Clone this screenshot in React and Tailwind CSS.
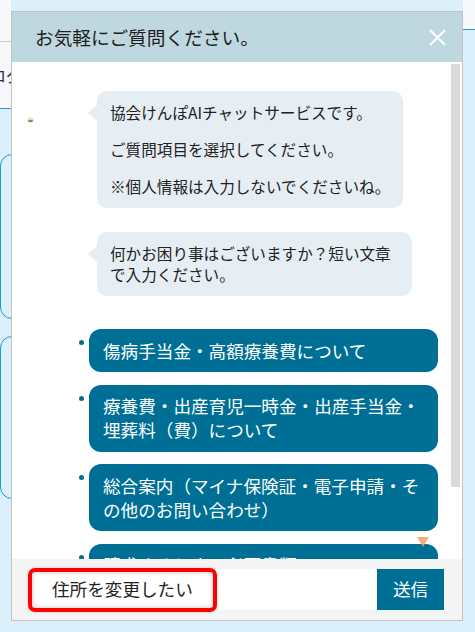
export default function App() {
  const options = [
    "傷病手当金・高額療養費について",
    "療養費・出産育児一時金・出産手当金・埋葬料（費）について",
    "総合案内（マイナ保険証・電子申請・その他のお問い合わせ）",
    "請求するときの必要書類について",
  ];
  return (
    <div className="relative w-[475px] h-[632px] overflow-hidden bg-[#dcf0fb] font-['Noto_Sans_CJK_JP','Noto_Sans',sans-serif]">
      {/* background page */}
      <div className="flex h-full justify-between">
        <div className="w-[11px] flex flex-col overflow-hidden">
          <div className="h-[42px] shrink-0 bg-[#f7f8fa] border-b border-[#c9cdd2]" />
          <div className="h-[67px] shrink-0 bg-[#f7f8fa] border-b border-[#1b9ad0] flex items-center">
            <span className="ml-[-10px] whitespace-nowrap text-[16px] leading-none text-[#1d2950]">ログイン</span>
          </div>
          <div className="mt-[45px] h-[165px] w-[40px] shrink-0 rounded-[12px] border border-[#1b9ad0]" />
          <div className="mt-[17px] h-[163px] w-[40px] shrink-0 rounded-[12px] border border-[#1b9ad0]" />
        </div>
        <div className="w-[12px] flex flex-col">
          <div className="h-[30px] shrink-0 bg-[#f7f8fa] border-b border-[#1b9ad0]" />
        </div>
      </div>

      {/* chat modal */}
      <div className="absolute left-[11px] top-[11px] w-[452px] h-[610px] border border-[#c3c3c3] bg-white flex flex-col">
        <div className="h-[50px] shrink-0 bg-[#bfd8df] flex items-center justify-between pl-[23px] pr-[16px]">
          <span className="text-[18.7px] leading-none text-[#1e1e1e]">お気軽にご質問ください。</span>
          <svg width="17" height="17" viewBox="0 0 17 17" fill="none">
            <path d="M1 1 L16 16 M16 1 L1 16" stroke="#ffffff" strokeWidth="2" />
          </svg>
        </div>

        <div className="relative flex-1 flex overflow-hidden bg-white">
          <div className="flex-1 min-w-0 pt-[29px] pr-[13px] flex flex-col">
            <div className="flex pl-[15px]">
              <div className="w-[70px] shrink-0 pt-[26px]">
                <svg width="7" height="6" viewBox="0 0 7 6">
                  <ellipse cx="3.5" cy="3" rx="3.2" ry="2.6" fill="#e9dcc6" />
                  <path d="M0.6 3.4 Q3.5 6 6.4 3.4 Z" fill="#4a3c2c" />
                </svg>
              </div>
              <div className="relative rounded-[10px] bg-[#e6eef4] px-[13px] py-[11px] text-[15.6px] leading-[21px] text-[#222] flex flex-col gap-[16px]">
                <div className="absolute left-[-9px] top-[14px] w-0 h-0 border-y-[8px] border-y-transparent border-r-[9px] border-r-[#e6eef4]" />
                <p>協会けんぽAIチャットサービスです。</p>
                <p>ご質問項目を選択してください。</p>
                <p>※個人情報は入力しないでくださいね。</p>
              </div>
            </div>

            <div className="relative self-start ml-[85px] mt-[24px] max-w-[315px] rounded-[10px] bg-[#e6eef4] px-[13px] py-[11px] text-[15.6px] leading-[21px] text-[#222]">
              <div className="absolute left-[-9px] top-[14px] w-0 h-0 border-y-[8px] border-y-transparent border-r-[9px] border-r-[#e6eef4]" />
              <p>何かお困り事はございますか？短い文章で入力ください。</p>
            </div>

            <ul className="mt-[33px] pl-[67px] flex flex-col gap-[12.5px]">
              {options.map((o) => (
                <li key={o} className="flex items-start gap-[5px]">
                  <span className="mt-[11px] w-[5px] h-[5px] shrink-0 rounded-full bg-[#00708f]" />
                  <button className="flex-1 text-left rounded-[12px] bg-[#006f95] text-white px-[14px] py-[9.5px] text-[17.6px] leading-[24px]">
                    {o}
                  </button>
                </li>
              ))}
            </ul>
          </div>
          <div className="w-[11px] shrink-0 pt-[2px] pr-[2px]">
            <div className="h-[423px] w-[9px] bg-[#dadada]" />
          </div>
          <svg className="absolute left-[405px] top-[475px]" width="12" height="10" viewBox="0 0 12 10">
            <polygon points="0,0 12,0 6,10" fill="#f59a5e" fillOpacity="0.82" />
          </svg>
        </div>

        <div className="relative h-[61px] shrink-0 bg-[#f4f4f4] flex items-center px-[18px]">
          <div className="flex-1 h-[41px] bg-white flex items-center pl-[22px] text-[17.6px] text-[#222]">
            住所を変更したい
          </div>
          <button className="w-[67px] h-[41px] bg-[#006f95] text-white text-[17.6px]">送信</button>
          <div className="absolute left-[16px] top-[9px] w-[189px] h-[44px] rounded-[7px] border-[4px] border-[#ff0000] shadow-[inset_0_0_5px_rgba(0,0,0,0.25),0_0_3px_rgba(0,0,0,0.2)]" />
        </div>
      </div>
    </div>
  );
}
